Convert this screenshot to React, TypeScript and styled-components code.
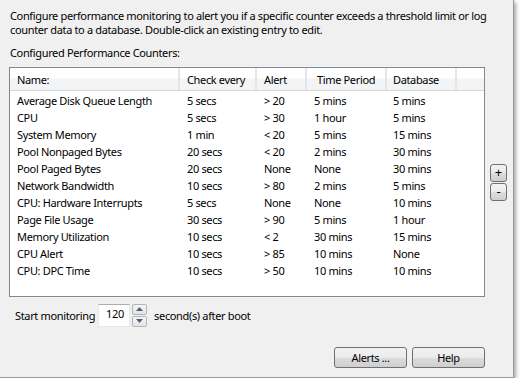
import React from "react";
import styled, { createGlobalStyle } from "styled-components";

const GlobalStyle = createGlobalStyle`
  html, body {
    margin: 0;
    padding: 0;
    background: #ffffff;
  }
  body {
    font-family: "Noto Sans", "Open Sans", sans-serif;
    font-size: 11px;
    letter-spacing: -0.35px;
    color: #000;
  }
`;

interface Counter {
  name: string;
  check: string;
  alert: string;
  period: string;
  database: string;
}

const counters: Counter[] = [
  { name: "Average Disk Queue Length", check: "5 secs", alert: "> 20", period: "5 mins", database: "5 mins" },
  { name: "CPU", check: "5 secs", alert: "> 30", period: "1 hour", database: "5 mins" },
  { name: "System Memory", check: "1 min", alert: "< 20", period: "5 mins", database: "15 mins" },
  { name: "Pool Nonpaged Bytes", check: "20 secs", alert: "< 20", period: "2 mins", database: "30 mins" },
  { name: "Pool Paged Bytes", check: "20 secs", alert: "None", period: "None", database: "30 mins" },
  { name: "Network Bandwidth", check: "10 secs", alert: "> 80", period: "2 mins", database: "5 mins" },
  { name: "CPU: Hardware Interrupts", check: "5 secs", alert: "None", period: "None", database: "10 mins" },
  { name: "Page File Usage", check: "30 secs", alert: "> 90", period: "5 mins", database: "1 hour" },
  { name: "Memory Utilization", check: "10 secs", alert: "< 2", period: "30 mins", database: "15 mins" },
  { name: "CPU Alert", check: "10 secs", alert: "> 85", period: "10 mins", database: "None" },
  { name: "CPU: DPC Time", check: "10 secs", alert: "> 50", period: "10 mins", database: "10 mins" },
];

const COLUMNS = "170px 77px 50px 80px 70px 1fr";

export default function App() {
  return (
    <>
      <GlobalStyle />
      <Dialog>
        <Intro>
          Configure performance monitoring to alert you if a specific counter exceeds a threshold limit or log
          counter data to a database. Double-click an existing entry to edit.
        </Intro>
        <Label>Configured Performance Counters:</Label>
        <ListRow>
          <ListBox>
            <HeaderRow>
              <HeaderCell>Name:</HeaderCell>
              <HeaderCell>Check every</HeaderCell>
              <HeaderCell>Alert</HeaderCell>
              <HeaderCell $pad={10}>Time Period</HeaderCell>
              <HeaderCell $pad={6}>Database</HeaderCell>
              <HeaderCell $last />
            </HeaderRow>
            <Rows>
              {counters.map((c) => (
                <DataRow key={c.name}>
                  <Cell>{c.name}</Cell>
                  <Cell>{c.check}</Cell>
                  <Cell>{c.alert}</Cell>
                  <Cell>{c.period}</Cell>
                  <Cell $pad={6}>{c.database}</Cell>
                  <Cell />
                </DataRow>
              ))}
            </Rows>
          </ListBox>
          <SideButtons>
            <SmallButton>+</SmallButton>
            <SmallButton>-</SmallButton>
          </SideButtons>
        </ListRow>
        <StartRow>
          <span>Start monitoring</span>
          <SpinBox>
            <SpinInput>120</SpinInput>
            <SpinArrows>
              <SpinArrow>
                <svg width="7" height="4" viewBox="0 0 7 4">
                  <path d="M0 4 L3.5 0 L7 4 Z" fill="#4d6185" />
                </svg>
              </SpinArrow>
              <SpinArrow>
                <svg width="7" height="4" viewBox="0 0 7 4">
                  <path d="M0 0 L3.5 4 L7 0 Z" fill="#4d6185" />
                </svg>
              </SpinArrow>
            </SpinArrows>
          </SpinBox>
          <span>second(s) after boot</span>
        </StartRow>
        <Footer>
          <PushButton>Alerts ...</PushButton>
          <PushButton>Help</PushButton>
        </Footer>
      </Dialog>
    </>
  );
}

const Dialog = styled.div`
  box-sizing: border-box;
  width: 514px;
  height: 378px;
  background: #f0f0f0;
  border-right: 1px solid #9a9a9a;
  border-bottom: 1px solid #9a9a9a;
  box-shadow: 2px 2px 4px rgba(0, 0, 0, 0.35);
  display: flex;
  flex-direction: column;
  padding: 9px 0 0 9px;
`;

const Intro = styled.p`
  margin: 0 0 0 1px;
  width: 490px;
  line-height: 14px;
`;

const Label = styled.div`
  margin: 9px 0 0 1px;
  line-height: 14px;
`;

const ListRow = styled.div`
  display: flex;
  align-items: center;
  margin-top: 7px;
  gap: 5px;
`;

const ListBox = styled.div`
  box-sizing: border-box;
  width: 476px;
  height: 230px;
  background: #ffffff;
  border: 1px solid #828790;
`;

const HeaderRow = styled.div`
  display: grid;
  grid-template-columns: ${COLUMNS};
  height: 22px;
  background: linear-gradient(#ffffff 0%, #ffffff 45%, #f3f4f6 50%, #f3f4f6 100%);
  border-bottom: 1px solid #d5d5d5;
`;

const HeaderCell = styled.div<{ $pad?: number; $last?: boolean }>`
  display: flex;
  align-items: center;
  padding-left: ${(p) => p.$pad ?? 7}px;
  border-right: ${(p) => (p.$last ? "none" : "2px solid #e5e5e5")};
  white-space: nowrap;
`;

const Rows = styled.div`
  padding-top: 1px;
`;

const DataRow = styled.div`
  display: grid;
  grid-template-columns: ${COLUMNS};
  height: 17px;
`;

const Cell = styled.div<{ $pad?: number }>`
  display: flex;
  align-items: center;
  padding-left: ${(p) => p.$pad ?? 7}px;
  white-space: nowrap;
`;

const SideButtons = styled.div`
  display: flex;
  flex-direction: column;
  gap: 1px;
`;

const SmallButton = styled.button`
  box-sizing: border-box;
  width: 17px;
  height: 18px;
  padding: 0;
  font-family: inherit;
  font-size: 13px;
  line-height: 1;
  color: #000;
  border: 1px solid #707070;
  border-radius: 3px;
  background: linear-gradient(#f2f2f2 0%, #ebebeb 50%, #dddddd 51%, #cfcfcf 100%);
  display: flex;
  align-items: center;
  justify-content: center;
`;

const StartRow = styled.div`
  display: flex;
  align-items: center;
  margin: 6px 0 0 6px;
  height: 24px;
`;

const SpinBox = styled.div`
  display: flex;
  align-items: stretch;
  margin: 0 7px 0 3px;
  height: 23px;
`;

const SpinInput = styled.div`
  box-sizing: border-box;
  width: 32px;
  background: #ffffff;
  border: 1px solid #e3e9ef;
  border-top-color: #abadb3;
  padding: 2px 0 0 7px;
  line-height: 14px;
`;

const SpinArrows = styled.div`
  display: flex;
  flex-direction: column;
  gap: 1px;
  margin-left: 2px;
`;

const SpinArrow = styled.div`
  box-sizing: border-box;
  width: 15px;
  flex: 1;
  border: 1px solid #b4b4b4;
  border-radius: 2px;
  background: linear-gradient(#f6f6f6, #e4e4e4);
  display: flex;
  align-items: center;
  justify-content: center;
`;

const Footer = styled.div`
  display: flex;
  justify-content: flex-end;
  gap: 5px;
  margin-top: auto;
  margin-bottom: 9px;
  padding-right: 28px;
`;

const PushButton = styled.button`
  box-sizing: border-box;
  width: 73px;
  height: 21px;
  padding: 0;
  font-family: inherit;
  font-size: 11px;
  letter-spacing: -0.35px;
  color: #000;
  border: 1px solid #707070;
  border-radius: 3px;
  background: linear-gradient(#f2f2f2 0%, #ebebeb 50%, #dddddd 51%, #cfcfcf 100%);
`;
